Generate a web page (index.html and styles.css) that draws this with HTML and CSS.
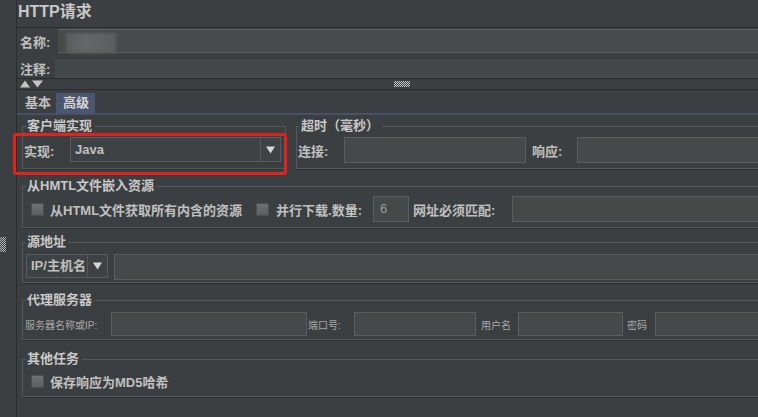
FILE: index.html
```html
<!DOCTYPE html>
<html lang="zh-CN">
<head>
    <meta charset="UTF-8">
    <title>HTTP请求</title>
    <link rel="stylesheet" href="styles.css">
</head>
<body>
    <div class="app">
        <div class="side"><span class="grip"></span></div>
        <div class="main">
            <div class="title">HTTP请求</div>
            <div class="meta-row name-row">
                <label>名称:</label>
                <div class="meta-field"><span class="blur"></span></div>
            </div>
            <div class="meta-row comment-row">
                <label>注释:</label>
                <div class="meta-field"></div>
            </div>
            <div class="splitter">
                <svg class="arrows" width="24" height="8" viewBox="0 0 24 8">
                    <polygon points="0,7.5 5,0.5 10,7.5" fill="#c4c4c4"/>
                    <polygon points="12,0.5 23,0.5 17.5,7.5" fill="#c4c4c4"/>
                </svg>
                <span class="dots"></span>
            </div>
            <div class="tabs">
                <span class="tab">基本</span>
                <span class="tab active">高级</span>
            </div>

            <div class="panel">
                <div class="row-top">
                    <fieldset class="group impl">
                        <legend>客户端实现</legend>
                        <div class="row row-a">
                            <span class="lbl lbl-impl">实现:</span>
                            <div class="combo combo-impl">
                                <span class="value">Java</span>
                                <span class="arrow"><svg width="9" height="8" viewBox="0 0 9 8"><polygon points="0,0.5 9,0.5 4.5,7.5" fill="#d6d6d6"/></svg></span>
                            </div>
                        </div>
                    </fieldset>
                    <fieldset class="group timeout">
                        <legend>超时（毫秒）</legend>
                        <div class="row row-a">
                            <span class="lbl lbl-connect">连接:</span>
                            <div class="field f-connect"></div>
                            <span class="lbl lbl-response">响应:</span>
                            <div class="field f-grow"></div>
                        </div>
                    </fieldset>
                </div>

                <fieldset class="group embed">
                    <legend>从HMTL文件嵌入资源</legend>
                    <div class="row row-b">
                        <span class="check c-first"></span>
                        <span class="check-label">从HTML文件获取所有内含的资源</span>
                        <span class="check c-second"></span>
                        <span class="check-label lbl-threads">并行下载.数量:</span>
                        <div class="field f-threads">6</div>
                        <span class="lbl lbl-match">网址必须匹配:</span>
                        <div class="field f-grow"></div>
                    </div>
                </fieldset>

                <fieldset class="group source">
                    <legend>源地址</legend>
                    <div class="row row-c">
                        <div class="combo combo-ip">
                            <span class="value">IP/主机名</span>
                            <span class="arrow"><svg width="9" height="8" viewBox="0 0 9 8"><polygon points="0,0.5 9,0.5 4.5,7.5" fill="#d6d6d6"/></svg></span>
                        </div>
                        <div class="field f-grow f-source"></div>
                    </div>
                </fieldset>

                <fieldset class="group proxy">
                    <legend>代理服务器</legend>
                    <div class="row row-d">
                        <span class="small small-host">服务器名称或IP:</span>
                        <div class="field f-host"></div>
                        <span class="small small-port">端口号:</span>
                        <div class="field f-port"></div>
                        <span class="small small-user">用户名</span>
                        <div class="field f-user"></div>
                        <span class="small small-pass">密码</span>
                        <div class="field f-grow"></div>
                    </div>
                </fieldset>

                <fieldset class="group other">
                    <legend>其他任务</legend>
                    <div class="row row-e">
                        <span class="check c-first"></span>
                        <span class="check-label">保存响应为MD5哈希</span>
                    </div>
                </fieldset>
            </div>
        </div>
    </div>
    <div class="mark"></div>
</body>
</html>
```

FILE: styles.css
```css
html, body {
    margin: 0;
    height: 100%;
    overflow: hidden;
}
body {
    position: relative;
    background-color: #3c3f41;
    color: #c0c0c0;
    font-family: "Liberation Sans", "Noto Sans CJK SC", sans-serif;
    font-size: 13px;
}
/* the window is cut off on the right, so the form runs on past it */
.app {
    display: flex;
    width: 790px;
    height: 417px;
}
.side {
    width: 17px;
    flex-shrink: 0;
    border-right: 1px solid #2a2c2d;
    padding-top: 237px;
    box-sizing: border-box;
}
.grip {
    display: block;
    width: 6px;
    height: 15px;
    background: repeating-conic-gradient(#b4b4b4 0 25%, #3c3f41 0 50%) 0 0 / 2px 2px;
}
.main {
    flex: 1;
    min-width: 0;
    display: flex;
    flex-direction: column;
}
.title {
    height: 27px;
    line-height: 23px;
    padding-left: 1px;
    font-size: 16px;
    font-weight: bold;
    color: #c8c8c8;
    border-bottom: 1px solid #2a2c2d;
}
.meta-row {
    display: flex;
    align-items: center;
    padding-left: 3px;
    font-weight: bold;
}
.meta-row label {
    width: 38px;
}
.name-row {
    height: 26px;
}
.name-row .meta-field {
    flex: 1;
    height: 24px;
    background-color: #484b4b;
    border-top: 1px solid #606366;
    border-bottom: 1px solid #5c5f61;
    box-sizing: border-box;
}
.blur {
    display: block;
    width: 50px;
    height: 20px;
    margin: 3px 0 0 8px;
    background: linear-gradient(90deg, #5a5d5e, #646767 40%, #5b5e5f);
    filter: blur(1.5px);
}
.comment-row {
    height: 24px;
    padding-top: 4px;
    box-sizing: border-box;
}
.comment-row label {
    width: 35px;
}
.comment-row .meta-field {
    flex: 1;
    height: 19px;
    background-color: #45484a;
    border-bottom: 1px solid #4c4f51;
    box-sizing: border-box;
}
.splitter {
    display: flex;
    align-items: center;
    height: 10px;
    padding-left: 3px;
    border-top: 1px solid #2a2c2d;
    border-bottom: 1px solid #2a2c2d;
}
.dots {
    width: 16px;
    height: 6px;
    margin-left: 350px;
    background: repeating-conic-gradient(#c8c8c8 0 25%, #3c3f41 0 50%) 0 0 / 2px 2px;
}
.tabs {
    display: flex;
    align-items: flex-end;
    height: 23px;
    padding-left: 5px;
    border-bottom: 2px solid #4b5066;
}
.tab {
    height: 20px;
    line-height: 20px;
    padding: 0 3px;
    font-weight: bold;
}
.tab.active {
    margin-left: 2px;
    padding: 0 6px 0 7px;
    background-color: #4b5670;
    color: #d4d4d4;
}
.panel {
    display: flex;
    flex-direction: column;
    padding: 3px 0 0 5px;
}
.row-top {
    display: flex;
}
.group {
    margin: 0;
    padding: 0 2px 5px 1px;
    border: 1px solid #55585a;
    box-shadow: 0 1px 0 #2e3032;
    min-width: 0;
}
.group legend {
    margin-left: 2px;
    padding: 0 3px 0 1px;
    line-height: 16px;
    font-weight: bold;
    color: #c8c8c8;
}
.row {
    display: flex;
    align-items: center;
}
.lbl, .check-label {
    font-weight: bold;
    white-space: nowrap;
}
.field {
    height: 26px;
    box-sizing: border-box;
    background-color: #46494a;
    border: 1px solid #5b5e60;
}
.f-grow {
    flex: 1;
}

/* client implementation */
.impl {
    width: 264px;
    flex-shrink: 0;
    box-sizing: border-box;
}
.timeout {
    flex: 1;
    margin-left: 10px;
}
.row-a {
    margin-top: 3px;
    height: 26px;
}
.lbl-impl {
    width: 46px;
}
.combo {
    display: flex;
    box-sizing: border-box;
    background-color: #3f4244;
    border: 1px solid #5a5d5f;
}
.combo .value {
    flex: 1;
    padding-left: 4px;
    font-weight: bold;
}
.combo .arrow {
    display: flex;
    align-items: center;
    justify-content: center;
    width: 19px;
    border-left: 1px solid #55585a;
}
.combo-impl {
    flex: 1;
    height: 25px;
    line-height: 23px;
    margin: -1px 2px 0 0;
}
.lbl-connect {
    width: 46px;
}
.f-connect {
    width: 182px;
}
.lbl-response {
    width: 45px;
    margin-left: 6px;
}

/* embedded resources */
.embed {
    margin-top: 9px;
}
.row-b {
    margin-top: 2px;
    height: 26px;
}
.check {
    width: 13px;
    height: 13px;
    box-sizing: border-box;
    background: linear-gradient(#6e7173, #5c5f61);
    border: 1px solid #4c4f51;
}
.c-first {
    margin-left: 7px;
}
.row-b .check-label:nth-child(2) {
    margin-left: 6px;
}
.c-second {
    margin-left: 14px;
}
.lbl-threads {
    width: 97px;
    margin-left: 7px;
}
.f-threads {
    width: 36px;
    padding-left: 6px;
    line-height: 24px;
    color: #9a9a9a;
}
.lbl-match {
    width: 99px;
    margin-left: 4px;
}

/* source address */
.source {
    margin-top: 6px;
    padding-bottom: 2px;
}
.row-c {
    align-items: flex-start;
    margin-top: 4px;
    height: 26px;
}
.combo-ip {
    width: 82px;
    height: 24px;
    line-height: 22px;
    margin-left: 2px;
}
.f-source {
    margin-left: 6px;
}

/* proxy */
.proxy {
    margin-top: 9px;
    padding-bottom: 3px;
}
.row-d {
    margin-top: 4px;
    height: 24px;
}
.row-d .field {
    height: 24px;
}
.small {
    font-size: 10px;
    color: #a8a8a8;
    white-space: nowrap;
    box-sizing: border-box;
}
.small-host {
    width: 86px;
    margin-left: 1px;
}
.f-host {
    width: 196px;
}
.small-port {
    width: 47px;
    padding-left: 1px;
}
.f-port {
    width: 122px;
}
.small-user {
    width: 42px;
    padding-left: 5px;
}
.f-user {
    width: 105px;
}
.small-pass {
    width: 32px;
    padding-left: 4px;
}

/* other tasks */
.other {
    margin-top: 11px;
    padding-bottom: 7px;
}
.row-e {
    margin-top: 7px;
    height: 15px;
}
.row-e .check-label {
    margin-left: 6px;
}

/* red highlight drawn over the screenshot */
.mark {
    position: absolute;
    left: 13px;
    top: 133px;
    width: 268px;
    height: 36px;
    border: 3px solid #e3221c;
    border-radius: 3px;
}
```
